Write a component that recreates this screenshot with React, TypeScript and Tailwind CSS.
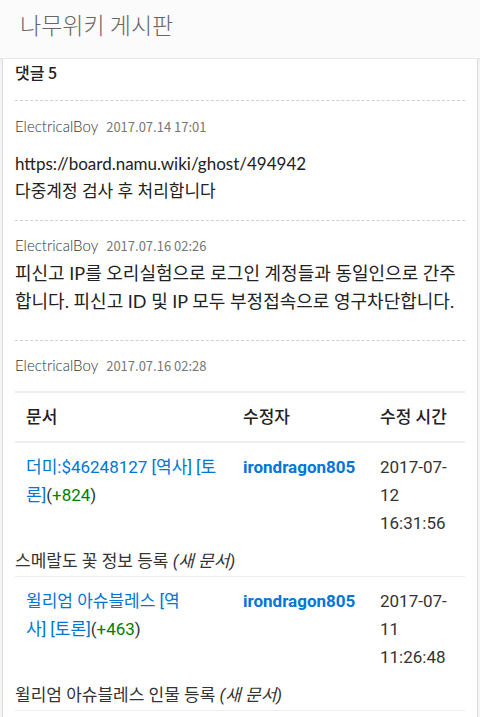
import React from "react";

const kr = { fontFamily: '"Noto Sans CJK KR", "Noto Sans", sans-serif' };
const body = { fontFamily: 'Lato, "Noto Sans CJK KR", sans-serif' };
const tbl = { fontFamily: 'Roboto, "Noto Sans CJK KR", sans-serif' };

type Row = {
  doc: React.ReactNode;
  diff: string;
  author: string;
  day: string;
  time: string;
  note: string;
};

const rows: Row[] = [
  {
    doc: (
      <>
        더미:$46248127 [역사] [토
        <br />
        론]
      </>
    ),
    diff: "+824",
    author: "irondragon805",
    day: "12",
    time: "16:31:56",
    note: "스메랄도 꽃 정보 등록",
  },
  {
    doc: (
      <>
        윌리엄 아슈블레스 [역
        <br />
        사] [토론]
      </>
    ),
    diff: "+463",
    author: "irondragon805",
    day: "11",
    time: "11:26:48",
    note: "윌리엄 아슈블레스 인물 등록",
  },
];

const Author = ({ date }: { date: string }) => (
  <div className="flex items-baseline leading-[20px]" style={body}>
    <span className="text-[15px] font-light text-[#333]">ElectricalBoy</span>
    <span className="ml-[8px] text-[13px] text-[#777]" style={kr}>
      {date}
    </span>
  </div>
);

export default function App() {
  return (
    <div className="flex min-h-[717px] w-[480px] flex-col overflow-hidden bg-[#f4f4f4]" style={kr}>
      <header className="h-[59px] shrink-0 border-b border-[#e8e8e8] bg-[#fbfbfb] px-[20px] pt-[7px] shadow-[0_1px_2px_rgba(0,0,0,0.05)]">
        <h1 className="text-[23px] font-light leading-[34px] text-[#666]">나무위키 게시판</h1>
      </header>

      <main className="mx-[2px] flex-1 border-x border-[#dcdcdc] bg-white px-[12px] pb-[20px]">
        <div className="h-[41px] pt-[3px] text-[16px] font-medium leading-[20px] text-[#222]">댓글 5</div>

        <section className="border-t border-dashed border-[#cfcfcf] pb-[16px] pt-[15px]">
          <Author date="2017.07.14 17:01" />
          <p className="mt-[13px] text-[17px] leading-[27px] text-[#222]" style={body}>
            https://board.namu.wiki/ghost/494942
            <br />
            다중계정 검사 후 처리합니다
          </p>
        </section>

        <section className="border-t border-dashed border-[#cfcfcf] pb-[25px] pt-[14px]">
          <Author date="2017.07.16 02:26" />
          <p className="mt-[3px] text-[18px] leading-[28px] text-[#222]" style={body}>
            피신고 IP를 오리실험으로 로그인 계정들과 동일인으로 간주합니다. 피신고 ID 및 IP 모두 부정접속으로 영구차단합니다.
          </p>
        </section>

        <section className="border-t border-dashed border-[#cfcfcf] pt-[14px]">
          <Author date="2017.07.16 02:28" />
          <table className="mt-[15px] w-full border-collapse text-[17px] text-[#333]" style={tbl}>
            <thead>
              <tr className="border-y-2 border-[#eceeef] text-left text-[#222]">
                <th className="w-[217px] px-[11px] py-[10px] font-medium leading-[28px]">문서</th>
                <th className="w-[137px] px-[11px] py-[10px] font-medium leading-[28px]">수정자</th>
                <th className="px-[11px] py-[10px] font-medium leading-[28px]">수정 시간</th>
              </tr>
            </thead>
            <tbody>
              {rows.map((r) => (
                <React.Fragment key={r.note}>
                  <tr className="align-top leading-[28px]">
                    <td className="px-[11px] py-[10px]">
                      <span className="text-[#0275d8]">{r.doc}</span>(
                      <span className="text-[#008000]">{r.diff}</span>)
                    </td>
                    <td className="px-[11px] py-[10px] font-bold text-[#0275d8]">{r.author}</td>
                    <td className="px-[11px] py-[10px] text-[#333]">
                      2017-07-
                      <br />
                      {r.day}
                      <br />
                      {r.time}
                    </td>
                  </tr>
                  <tr className="border-b border-[#eceeef]">
                    <td colSpan={3} className="pb-[1px] leading-[28px] text-[#333]">
                      {r.note} <i>(새 문서)</i>
                    </td>
                  </tr>
                </React.Fragment>
              ))}
            </tbody>
          </table>
        </section>
      </main>
    </div>
  );
}
